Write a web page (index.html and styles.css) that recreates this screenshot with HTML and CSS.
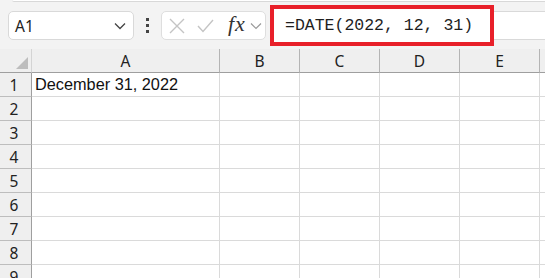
FILE: index.html
```html
<!DOCTYPE html>
<html lang="en">
<head>
    <meta charset="UTF-8">
    <title>Sheet - DATE</title>
    <link rel="stylesheet" href="styles.css">
</head>
<body>

<div class="top-strip"></div>

<div class="toolbar">
    <div class="name-box">
        <span class="name-value">A1</span>
        <svg class="chevron" width="12" height="8" viewBox="0 0 12 8"><path d="M1 1.5 L6 6.5 L11 1.5" fill="none" stroke="#444" stroke-width="1.3"/></svg>
    </div>
    <div class="dots">
        <span></span><span></span><span></span>
    </div>
    <div class="fx-box">
        <svg class="fx-icon" width="16" height="16" viewBox="0 0 16 16"><path d="M1 1 L15 15 M15 1 L1 15" stroke="#c4c4c4" stroke-width="1.4" fill="none"/></svg>
        <svg class="fx-icon" width="17" height="14" viewBox="0 0 17 14"><path d="M1 7 L6 12.5 L16 1" stroke="#c4c4c4" stroke-width="1.4" fill="none"/></svg>
        <span class="fx-label">fx</span>
        <svg class="fx-chevron" width="12" height="8" viewBox="0 0 12 8"><path d="M1 1.5 L6 6.5 L11 1.5" fill="none" stroke="#9a9a9a" stroke-width="1.2"/></svg>
    </div>
    <div class="formula-bar">
        <span class="formula">=DATE(2022, 12, 31)</span>
        <!-- highlight box drawn over the formula -->
        <div class="highlight"></div>
    </div>
</div>

<div class="sheet">
    <div class="corner"><span class="corner-tri"></span></div>
    <div class="col-head">A</div>
    <div class="col-head">B</div>
    <div class="col-head">C</div>
    <div class="col-head">D</div>
    <div class="col-head">E</div>
    <div class="col-head col-rest"></div>

    <div class="row-head">1</div>
    <div class="cell">December 31, 2022</div>
    <div class="cell"></div><div class="cell"></div><div class="cell"></div><div class="cell"></div><div class="cell"></div>

    <div class="row-head">2</div>
    <div class="cell"></div><div class="cell"></div><div class="cell"></div><div class="cell"></div><div class="cell"></div><div class="cell"></div>

    <div class="row-head">3</div>
    <div class="cell"></div><div class="cell"></div><div class="cell"></div><div class="cell"></div><div class="cell"></div><div class="cell"></div>

    <div class="row-head">4</div>
    <div class="cell"></div><div class="cell"></div><div class="cell"></div><div class="cell"></div><div class="cell"></div><div class="cell"></div>

    <div class="row-head">5</div>
    <div class="cell"></div><div class="cell"></div><div class="cell"></div><div class="cell"></div><div class="cell"></div><div class="cell"></div>

    <div class="row-head">6</div>
    <div class="cell"></div><div class="cell"></div><div class="cell"></div><div class="cell"></div><div class="cell"></div><div class="cell"></div>

    <div class="row-head">7</div>
    <div class="cell"></div><div class="cell"></div><div class="cell"></div><div class="cell"></div><div class="cell"></div><div class="cell"></div>

    <div class="row-head">8</div>
    <div class="cell"></div><div class="cell"></div><div class="cell"></div><div class="cell"></div><div class="cell"></div><div class="cell"></div>

    <div class="row-head">9</div>
    <div class="cell"></div><div class="cell"></div><div class="cell"></div><div class="cell"></div><div class="cell"></div><div class="cell"></div>
</div>

</body>
</html>
```

FILE: styles.css
```css
body {
    margin: 0;
    background-color: #f3f3f3;
    font-family: "Noto Sans", "Open Sans", sans-serif;
    color: #1f1f1f;
    overflow: hidden;
    width: 545px;
    height: 278px;
}

.top-strip {
    height: 1px;
    margin-left: 12px;
    background-color: #ffffff;
    border-bottom: 1px solid #d8d8d8;
    border-bottom-left-radius: 4px;
}

.toolbar {
    height: 47px;
    display: flex;
    align-items: flex-start;
    padding-top: 9px;
    box-sizing: border-box;
}

.name-box {
    margin-left: 8px;
    width: 126px;
    height: 29px;
    box-sizing: border-box;
    background-color: #ffffff;
    border: 1px solid #d9d9d9;
    border-radius: 5px;
    display: flex;
    align-items: center;
    justify-content: space-between;
    padding: 0 6px 0 6px;
}

.name-value {
    font-size: 15.5px;
    color: #222;
}

.chevron {
    margin-right: 1px;
}

.dots {
    width: 27px;
    height: 29px;
    display: flex;
    flex-direction: column;
    align-items: center;
    justify-content: center;
    gap: 3px;
}

.dots span {
    width: 3px;
    height: 3px;
    background-color: #444;
}

.fx-box {
    width: 105px;
    height: 29px;
    box-sizing: border-box;
    background-color: #ffffff;
    border: 1px solid #dedede;
    border-radius: 5px;
    display: flex;
    align-items: center;
    padding-left: 7px;
}

.fx-icon {
    margin-right: 12px;
}

.fx-label {
    font-family: "Liberation Serif", "DejaVu Serif", serif;
    font-style: italic;
    font-size: 22px;
    color: #333;
    margin-left: 2px;
    margin-top: -4px;
    letter-spacing: 1px;
}

.fx-chevron {
    margin-left: 4px;
}

.formula-bar {
    position: relative;
    margin-left: 4px;
    flex: 1;
    height: 29px;
    box-sizing: border-box;
    background-color: #ffffff;
    border-top: 1px solid #d9d9d9;
    border-bottom: 1px solid #d9d9d9;
    display: flex;
    align-items: center;
    padding-left: 15px;
}

.formula {
    font-family: "Liberation Mono", "DejaVu Sans Mono", monospace;
    font-size: 16.5px;
    color: #1e1e1e;
    white-space: nowrap;
}

.highlight {
    position: absolute;
    left: 0;
    top: -7px;
    width: 224px;
    height: 41px;
    box-sizing: border-box;
    border: 4px solid #e8202a;
    box-shadow: inset 0 0 0 3px #ffffff;
}

.sheet {
    display: grid;
    grid-template-columns: 32px 188px 80px 80px 80px 80px 80px;
    grid-auto-rows: 24px;
    background-color: #ffffff;
}

.corner,
.col-head,
.row-head {
    background-color: #efefef;
    box-sizing: border-box;
}

.corner {
    position: relative;
    border-right: 1px solid #d4d4d4;
    border-bottom: 1px solid #9f9f9f;
}

.corner-tri {
    position: absolute;
    right: 3px;
    bottom: 3px;
    width: 0;
    height: 0;
    border-left: 12px solid transparent;
    border-bottom: 12px solid #bdbdbd;
}

.col-head {
    border-right: 1px solid #b4b4b4;
    border-bottom: 1px solid #9f9f9f;
    display: flex;
    align-items: center;
    justify-content: center;
    font-size: 15.5px;
    color: #222;
}

.col-rest {
    border-right: none;
}

.row-head {
    border-right: 1px solid #9f9f9f;
    border-bottom: 1px solid #bdbdbd;
    display: flex;
    align-items: center;
    justify-content: center;
    font-size: 15.5px;
    color: #222;
    padding-right: 3px;
}

.cell {
    box-sizing: border-box;
    border-right: 1px solid #dadada;
    border-bottom: 1px solid #dadada;
    font-family: "Liberation Sans", Arial, sans-serif;
    font-size: 16.3px;
    color: #111;
    display: flex;
    align-items: center;
    padding-left: 3px;
    white-space: nowrap;
}
```
